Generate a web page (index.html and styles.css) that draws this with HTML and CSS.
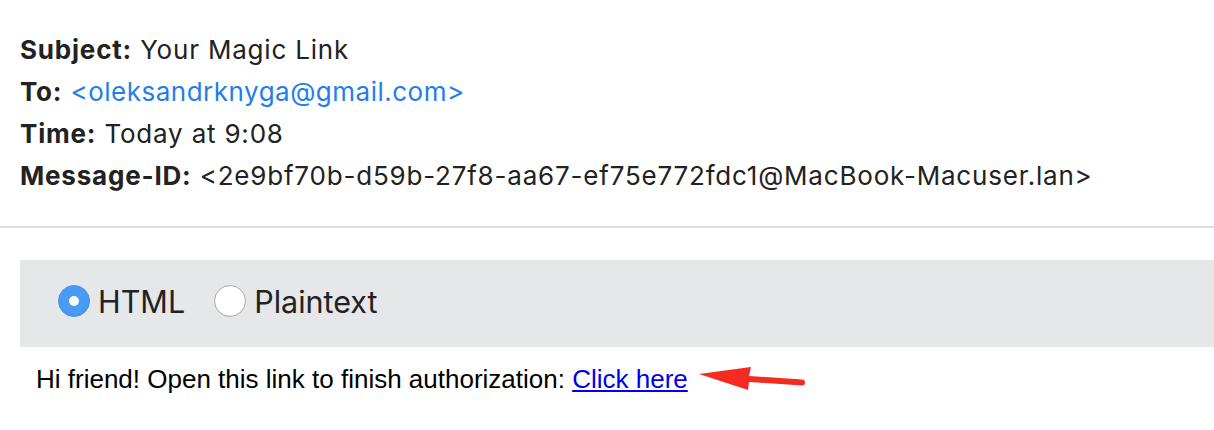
FILE: index.html
```html
<!DOCTYPE html>
<html>
<head>
<meta charset="utf-8">
<link rel="stylesheet" href="styles.css">
</head>
<body>
<div class="headers">
  <div class="row"><b>Subject:</b> Your Magic Link</div>
  <div class="row"><b>To:</b> <span class="addr">&lt;oleksandrknyga@gmail.com&gt;</span></div>
  <div class="row"><b>Time:</b> Today at 9:08</div>
  <div class="row"><b>Message-ID:</b> &lt;2e9bf70b-d59b-27f8-aa67-ef75e772fdc1@MacBook-Macuser.lan&gt;</div>
</div>
<hr class="divider">
<div class="tabs">
  <label class="opt"><span class="radio checked"></span>HTML</label>
  <label class="opt"><span class="radio"></span>Plaintext</label>
</div>
<div class="body">
  <p class="msg">Hi friend! Open this link to finish authorization: <a href="#">Click here</a></p>
  <svg class="arrow" width="130" height="40" viewBox="690 360 130 40">
    <path d="M699 374 L751 367 L749 376 L802 379.5 A3 3 0 0 1 802 385.5 L749 382 L748 390 Z" fill="#f32b22"/>
  </svg>
</div>
</body>
</html>
```
FILE: styles.css
```css
html, body {
  margin: 0;
  padding: 0;
  background: #ffffff;
}
body {
  width: 1214px;
  overflow: hidden;
  font-family: Inter, "Helvetica Neue", Arial, sans-serif;
}
.headers {
  padding: 29px 0 0 20px;
  color: #222222;
  font-size: 26px;
  letter-spacing: 0.8px;
}
.row {
  height: 42px;
  line-height: 42px;
  white-space: nowrap;
}
.row b {
  font-weight: 700;
}
.addr {
  color: #1f7eea;
  letter-spacing: 0.5px;
}
.divider {
  margin: 29px 0 0 0;
  border: 0;
  height: 2px;
  background: #dcdbe6;
}
.tabs {
  margin: 32px 0 0 20px;
  height: 87px;
  box-sizing: border-box;
  padding: 0 0 5px 38px;
  background: #e6e7e9;
  display: flex;
  align-items: center;
  gap: 29px;
  color: #222222;
  font-size: 30.5px;
}
.opt {
  display: flex;
  align-items: center;
  gap: 8px;
}
.radio {
  width: 32px;
  height: 32px;
  border-radius: 50%;
  box-sizing: border-box;
  background: #ffffff;
  border: 1px solid #a9a9a9;
  box-shadow: inset 0 -1px 1px rgba(0,0,0,0.08);
  position: relative;
}
.radio.checked {
  background: #4a9bf6;
  border-color: #4595ef;
}
.radio.checked::after {
  content: "";
  position: absolute;
  left: 50%;
  top: 50%;
  width: 10px;
  height: 10px;
  margin: -5px 0 0 -5px;
  border-radius: 50%;
  background: #ffffff;
}
.body {
  position: relative;
  padding-left: 36px;
}
.msg {
  margin: 0;
  padding-top: 16px;
  font-family: "Liberation Sans", Arial, sans-serif;
  font-size: 26px;
  line-height: 32px;
  color: #000000;
}
.msg a {
  color: #0000ee;
  text-decoration: underline;
}
.arrow {
  position: absolute;
  left: 690px;
  top: 13px;
}
```
